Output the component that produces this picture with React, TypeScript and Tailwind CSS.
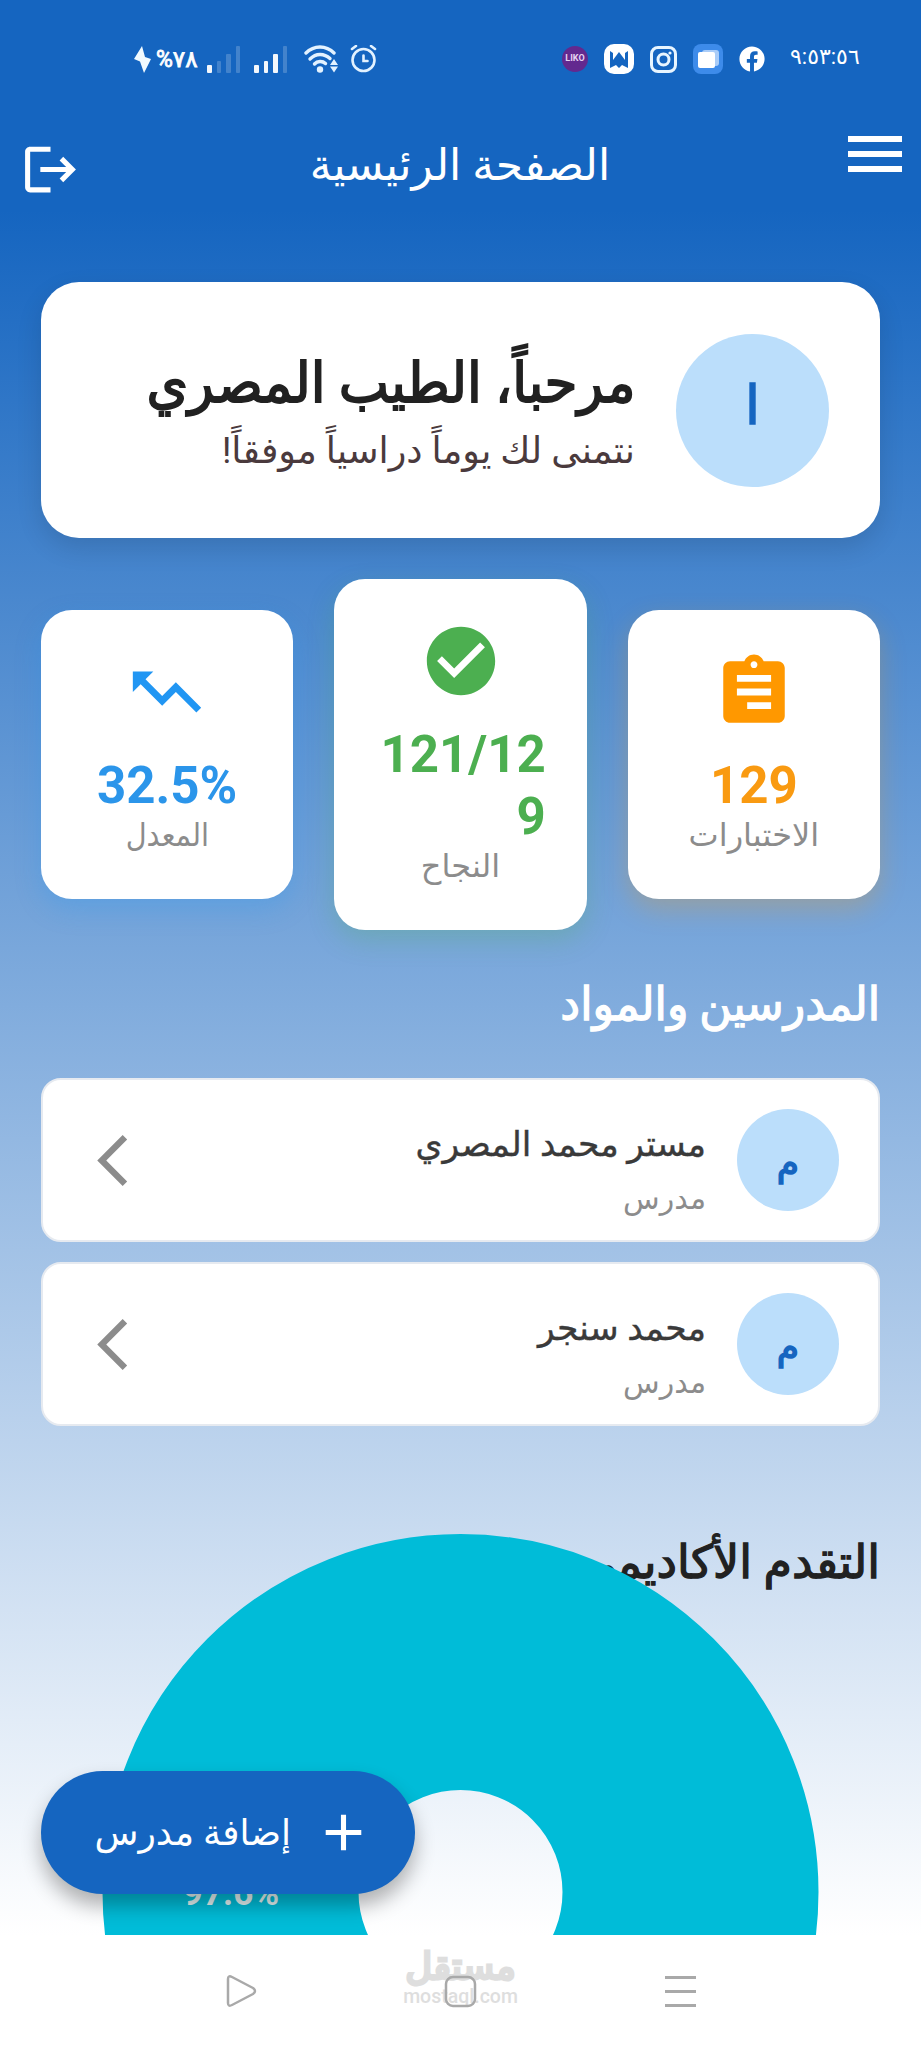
import {
  MdAdd,
  MdArrowBackIosNew,
  MdAssignment,
  MdCheckCircle,
  MdLogout,
  MdMenu,
  MdTrendingUp,
} from "react-icons/md";
import { FaFacebook } from "react-icons/fa";

interface Teacher {
  name: string;
  role: string;
}

const teachers: Teacher[] = [
  { name: "مستر محمد المصري", role: "مدرس" },
  { name: "محمد سنجر", role: "مدرس" },
];

function SignalBars({ level }: { level: number }) {
  const heights = ["h-[8px]", "h-[12px]", "h-[19px]", "h-[27px]"];
  return (
    <div className="flex items-end gap-[5px] h-[27px]">
      {heights.map((h, i) => (
        <span
          key={h}
          className={`w-[4.5px] rounded-[1px] bg-white ${h} ${i < level ? "opacity-95" : "opacity-20"}`}
        />
      ))}
    </div>
  );
}

function StatusBar() {
  return (
    <div dir="ltr" className="flex h-[118px] items-center pl-[134px] text-white">
      <svg width="17" height="27" viewBox="0 0 17 27" fill="#f0faff">
        <path d="M8 0 0 13l6 2.500 4 11.500 7-14-6-2z" />
      </svg>
      <span className="ml-[5px] w-[45px] text-[23px] leading-none whitespace-nowrap [-webkit-text-stroke:0.8px_white]">
        <span>%</span>
        <span>٧٨</span>
      </span>
      <div className="ml-[6px]">
        <SignalBars level={1} />
      </div>
      <div className="ml-[14px]">
        <SignalBars level={3} />
      </div>
      <svg className="ml-[17px]" width="36" height="28" viewBox="0 0 36 28" fill="none" stroke="#e3f2ff" strokeWidth="3.4" strokeLinecap="round">
        <path d="M2 8c8-8 20-8 28 0" />
        <path d="M6 14c6-6 14-6 20-.5" />
        <path d="M10.500 19c3-3.300 8-3.300 11-.5" />
        <circle cx="16" cy="24.500" r="3.200" fill="#e3f2ff" stroke="none" />
        <path d="M26 20l4-6 4 6zM26 21.500l4 6 4-6z" fill="#e3f2ff" stroke="none" />
      </svg>
      <svg className="ml-[10px]" width="27" height="28" viewBox="0 0 27 28" fill="none" stroke="#e3f2ff" strokeWidth="2.6" strokeLinecap="round">
        <circle cx="13.500" cy="15" r="11" />
        <path d="M13.500 10.500V16h4M2 4l4-3M25 4l-4-3" />
      </svg>

      <div className="ml-[185px] flex size-[26px] items-center justify-center rounded-full bg-[#63298f] text-[9px] font-bold text-[#e6d3f2]">
        LIKO
      </div>
      <svg className="ml-[16px]" width="30" height="30" viewBox="0 0 30 30">
        <rect width="30" height="30" rx="10" fill="#fff" />
        <path d="M6 7v17l6-3 3 3 3-3 6 3V7l-3 2v7l-6-8-6 8V9z" fill="#1565c0" />
      </svg>
      <svg className="ml-[16px]" width="27" height="27" viewBox="0 0 27 27" fill="none" stroke="#e8f5ff" strokeWidth="3">
        <rect x="1.500" y="1.500" width="24" height="24" rx="6.500" />
        <circle cx="13.500" cy="13.500" r="5.500" />
        <circle cx="20" cy="7" r="1.600" fill="#e8f5ff" stroke="none" />
      </svg>
      <svg className="ml-[16px]" width="30" height="30" viewBox="0 0 30 30">
        <rect width="30" height="30" rx="8" fill="#3d8bea" />
        <rect x="9" y="6" width="17" height="16" rx="3" fill="#a9ccf8" />
        <rect x="5" y="8" width="17" height="16" rx="2" fill="#fff" />
      </svg>
      <FaFacebook className="ml-[16px] size-[26px]" />
      <span className="ml-[25px] w-[72px] -translate-y-[2px] text-[22px] leading-none whitespace-nowrap">
        ٩:٥٣:٥٦
      </span>
    </div>
  );
}

function AppBar() {
  return (
    <header className="flex h-[92px] items-start justify-between pr-[10px] pl-[20px] text-white">
      <MdMenu className="size-[72px]" />
      <h1 className="mt-[12px] text-[44px] leading-[70px]">الصفحة الرئيسية</h1>
      <MdLogout className="mt-[21px] size-[61px]" />
    </header>
  );
}

function WelcomeCard() {
  return (
    <section className="flex h-[256px] items-center gap-[41px] rounded-[38px] bg-white px-[51px] shadow-[0_10px_26px_rgba(0,0,0,0.12)]">
      <div className="flex size-[153px] items-center justify-center rounded-full bg-[#bbdefb] pb-[10px] text-[54px] text-[#1565c0] [-webkit-text-stroke:1.5px_#1565c0]">
        ا
      </div>
      <div>
        <h2 className="origin-right scale-x-[0.96] text-[55.5px] leading-[78px] whitespace-nowrap text-[#212121] [-webkit-text-stroke:1.8px_#212121]">
          مرحباً، الطيب المصري
        </h2>
        <p className="pt-[3px] text-[36.5px] leading-[50px] whitespace-nowrap text-[#4a3a3d]">
          نتمنى لك يوماً دراسياً موفقاً!
        </p>
      </div>
    </section>
  );
}

function Stats() {
  const box = "flex flex-1 flex-col items-center rounded-[31px] bg-white px-[41px] pt-[41px] pb-[45px]";
  const value = "mt-[22px] text-[51px] leading-[61.5px] font-bold break-all";
  const label = "text-[32px] leading-[38px] text-[#8c8c8c]";
  return (
    <section className="mt-[41px] flex items-center gap-[41px]">
      <div className={`${box} shadow-[0_10px_26px_rgba(255,152,0,0.25)]`}>
        <MdAssignment className="size-[82px] -scale-x-100 text-[#ff9800]" />
        <div className={`${value} text-[#f99a11]`}>129</div>
        <div className={label}>الاختبارات</div>
      </div>
      <div className={`${box} shadow-[0_10px_26px_rgba(76,175,80,0.25)]`}>
        <MdCheckCircle className="size-[82px] text-[#4caf50]" />
        <div className={`${value} text-[#4caf50]`}>121/129</div>
        <div className={label}>النجاح</div>
      </div>
      <div className={`${box} shadow-[0_10px_26px_rgba(33,150,243,0.25)]`}>
        <MdTrendingUp className="size-[82px] -scale-x-100 text-[#2196f3]" />
        <div dir="ltr" className={`${value} text-[#2b95ea]`}>32.5%</div>
        <div className={`${label} scale-x-[0.9]`}>المعدل</div>
      </div>
    </section>
  );
}

function TeacherCard({ teacher }: { teacher: Teacher }) {
  return (
    <li className="flex h-[164px] items-center rounded-[20px] border-2 border-[#e6eaf0] bg-white px-[39px]">
      <div className="flex size-[102px] items-center justify-center rounded-full bg-[#bbdefb] pt-[6px] text-[36px] text-[#1565c0] [-webkit-text-stroke:1.5px_#1565c0]">
        م
      </div>
      <div className="mr-[31px] flex-1 pt-[18px]">
        <div className="text-[34.5px] leading-[60px] text-[#3a3a3a] [-webkit-text-stroke:0.4px_#3a3a3a]">
          {teacher.name}
        </div>
        <div className="text-[30px] leading-[50px] text-[#8c8c8c]">{teacher.role}</div>
      </div>
      <MdArrowBackIosNew className="size-[61px] text-[#8c8c8c]" />
    </li>
  );
}

function ProgressChart() {
  return (
    <svg className="relative -mt-[63px] block h-[402px] w-full" viewBox="0 0 839 402">
      <circle cx="419.500" cy="358" r="230" fill="none" stroke="#00bcd8" strokeWidth="256" />
      <text x="190" y="371" textAnchor="middle" fontSize="35" fontWeight="700" fill="#e6f4f5" direction="ltr">
        97.6%
      </text>
    </svg>
  );
}

function NavBar() {
  return (
    <nav dir="ltr" className="relative flex h-[113px] bg-white">
      <div className="absolute top-[12px] left-[405px] flex w-[111px] flex-col items-center text-[#dedede]">
        <span className="text-[37px] leading-[40px] [-webkit-text-stroke:3px_#dedede]">مستقل</span>
        <span className="text-[19.5px] leading-[20px] font-medium">mostaql.com</span>
      </div>
      <svg className="relative h-full w-full" viewBox="0 0 921 113" fill="none" stroke="#a9a9a9" strokeWidth="2.5" strokeLinejoin="round">
        <path d="M228 44v24q0 4 4 2l21-11q4-3 0-6l-21-11q-4-2-4 2z" />
        <rect x="446" y="42" width="29" height="29" rx="7" />
        <path d="M665 42.500h31M665 56.500h31M665 70.500h31" strokeWidth="3" />
      </svg>
    </nav>
  );
}

export default function App() {
  return (
    <div
      dir="rtl"
      className="relative flex h-[2048px] w-[921px] flex-col overflow-hidden bg-white font-[Roboto,'DejaVu_Sans',sans-serif]"
    >
      <div className="h-[1935px] overflow-hidden bg-[linear-gradient(to_bottom,#1565c0_0px,#1565c0_210px,#ffffff_1935px)]">
        <StatusBar />
        <AppBar />
        <main className="px-[41px] pt-[72px]">
          <WelcomeCard />
          <Stats />
          <h2 className="mt-[39px] origin-right scale-x-[0.965] text-[46px] leading-[70px] text-white [-webkit-text-stroke:1.3px_white]">
            المدرسين والمواد
          </h2>
          <ul className="mt-[39px] flex flex-col gap-[20px]">
            {teachers.map((t) => (
              <TeacherCard key={t.name} teacher={t} />
            ))}
          </ul>
          <h2 className="mt-[101px] text-[46px] leading-[70px] text-[#212121] [-webkit-text-stroke:1.3px_#212121]">
            التقدم الأكاديمي
          </h2>
          <ProgressChart />
        </main>
      </div>
      <NavBar />
      <button className="absolute top-[1771px] left-[41px] flex h-[123px] w-[374px] items-center rounded-full bg-[#1565c0] pr-[41px] text-white shadow-[0_12px_20px_rgba(0,0,0,0.3)]">
        <MdAdd className="size-[61px]" />
        <span className="mr-[22px] text-[36px] whitespace-nowrap">إضافة مدرس</span>
      </button>
    </div>
  );
}
